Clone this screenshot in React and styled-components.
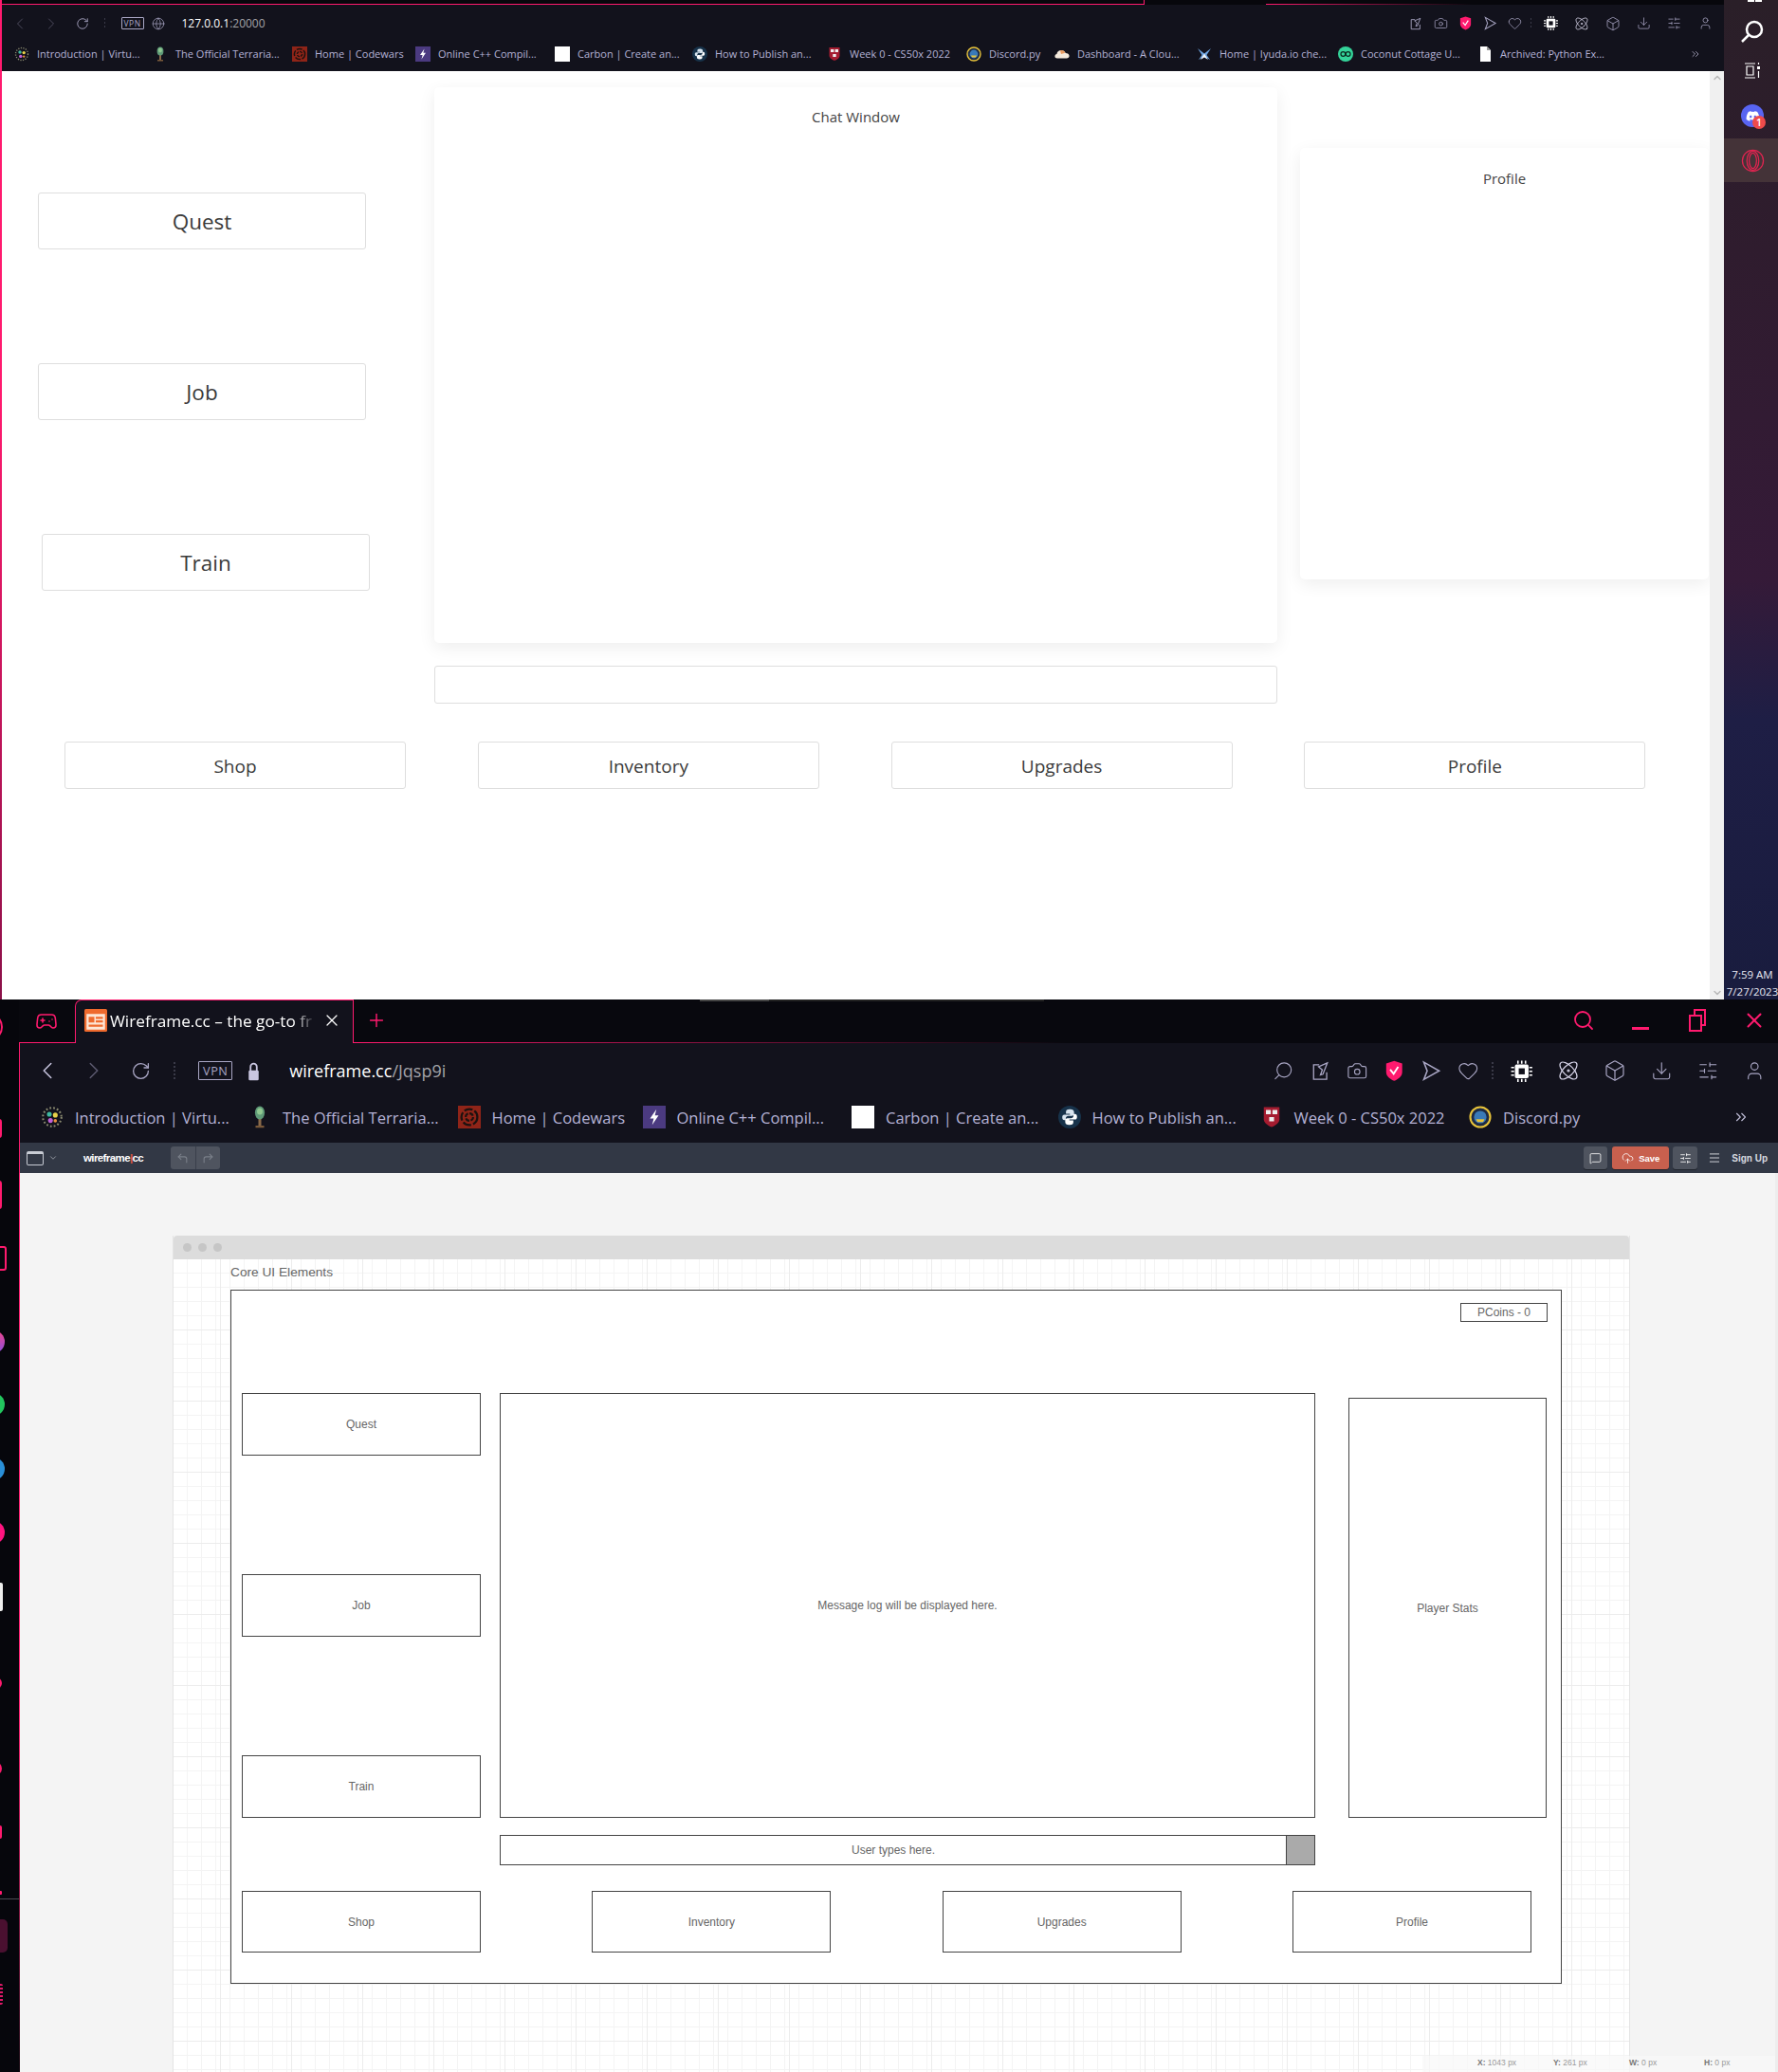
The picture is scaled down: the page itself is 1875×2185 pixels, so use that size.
import React from "react";
import styled, { createGlobalStyle } from "styled-components";
import {
  ChevronLeft,
  ChevronRight,
  RotateCw,
  Globe,
  Search,
  Camera,
  Heart,
  Box,
  Download,
  SlidersHorizontal,
  User,
  X,
  Plus,
  Gamepad2,
  Atom,
  ChevronsRight,
  MessageSquare,
  Menu,
  CornerUpLeft,
  CornerUpRight,
  CloudUpload,
} from "lucide-react";
import { FaDiscord } from "react-icons/fa";

const UI_FONT = `"Open Sans", "Noto Sans", sans-serif`;
const WF_FONT = `"Liberation Sans", Arial, sans-serif`;
const PINK = "#ff1a6e";
const LAV = "#a9a6c4";

const GlobalStyle = createGlobalStyle`
  html, body {
    margin: 0;
    padding: 0;
    background: #06060c;
  }
  body {
    font-family: ${UI_FONT};
    overflow: hidden;
  }
  * {
    box-sizing: border-box;
  }
`;

const Screen = styled.div`
  width: 1875px;
  height: 2185px;
  display: flex;
  flex-direction: column;
  overflow: hidden;
`;

/* upper window */
const TopWindow = styled.div`
  height: 1054px;
  flex: none;
  display: flex;
`;

const TopMain = styled.div`
  width: 1818px;
  display: flex;
  flex-direction: column;
  border-left: 2px solid;
  border-image: linear-gradient(${PINK}, ${PINK} 40%, #8a1048) 1;
`;

const TopStrip = styled.div`
  height: 5px;
  display: flex;
  background: #07070c;
`;

const StripLine = styled.div`
  height: 5px;
  width: ${(p) => p.$w}px;
  border-bottom: 1.5px solid;
  border-right: ${(p) => (p.$edge ? `1.5px solid ${PINK}` : "none")};
  border-color: ${(p) => (p.$off ? "transparent" : PINK)};
`;

const StripFade = styled.div`
  flex: 1;
  height: 5px;
  background: linear-gradient(90deg, ${PINK}, #07070c 45%) bottom / 100% 1.5px no-repeat;
`;

const Page = styled.div`
  flex: 1;
  display: flex;
  min-height: 0;
  background: #fff;
`;

const PageBody = styled.div`
  flex: 1;
  display: flex;
  flex-direction: column;
`;

const PageRow = styled.div`
  display: flex;
  padding-left: 38px;
`;

const ActionCol = styled.div`
  width: 350px;
  padding-top: 128px;
  display: flex;
  flex-direction: column;
  gap: 120px;
`;

const ChatCol = styled.div`
  width: 889px;
  margin-left: 68px;
  padding-top: 17px;
  display: flex;
  flex-direction: column;
`;

const SideCol = styled.div`
  width: 431px;
  margin-left: 24px;
  padding-top: 81px;
`;

const PageButton = styled.div`
  width: ${(p) => p.$w || 346}px;
  height: ${(p) => p.$h || 60}px;
  margin-left: ${(p) => p.$shift || 0}px;
  padding-top: 1px;
  display: flex;
  align-items: center;
  justify-content: center;
  background: #fff;
  border: 1px solid #dedede;
  border-radius: 3px;
  color: #3a3a3a;
  font-size: ${(p) => p.$fs || 22.5}px;
`;

const Card = styled.div`
  height: ${(p) => p.$h}px;
  padding-top: ${(p) => p.$pad}px;
  text-align: center;
  background: #fff;
  border-radius: 5px;
  box-shadow: 0 5px 18px rgba(0, 0, 0, 0.07);
  color: #444;
  font-size: 15px;
  line-height: 20px;
`;

const ChatInput = styled.div`
  height: 40px;
  margin-top: 24px;
  border: 1px solid #dedede;
  border-radius: 3px;
`;

const PageNav = styled.div`
  display: grid;
  grid-template-columns: repeat(4, 360px);
  column-gap: 75.8px;
  margin-top: 40px;
  padding-left: 66px;
`;

const ScrollTrack = styled.div`
  width: 15px;
  display: flex;
  flex-direction: column;
  justify-content: space-between;
  align-items: center;
  padding: 1px 0;
  background: #f0f0f0;
  color: #b8b8b8;
`;

/* windows taskbar */
const Taskbar = styled.div`
  width: 57px;
  padding-left: 3px;
  display: flex;
  flex-direction: column;
  align-items: center;
  background: linear-gradient(#2a1f28 0, #2f1c2e 25%, #351a38 58%, #1e1e45 72%, #191c3e 100%);
  color: #fff;
`;

const WinLogo = styled.div`
  width: 15px;
  height: 2px;
  margin-left: 4px;
  background: linear-gradient(90deg, #fff 45%, transparent 45%, transparent 55%, #fff 55%);
`;

const BarIcon = styled.div`
  height: ${(p) => p.$h}px;
  width: 100%;
  margin-top: ${(p) => p.$top || 0}px;
  display: flex;
  align-items: center;
  justify-content: center;
`;

const OperaTile = styled.div`
  height: 46px;
  width: 57px;
  margin: 12px 0 0 -3px;
  padding-left: 3px;
  display: flex;
  align-items: center;
  justify-content: center;
  background: #443338;
`;

const DiscordDot = styled.div`
  position: relative;
  width: 24px;
  height: 24px;
  border-radius: 50%;
  background: #5865f2;
  display: flex;
  align-items: center;
  justify-content: center;
  color: #fff;
`;

const DiscordBadge = styled.span`
  position: absolute;
  right: -2px;
  bottom: -2px;
  width: 14px;
  height: 14px;
  border-radius: 50%;
  background: #ee4b4b;
  color: #fff;
  font-size: 10.5px;
  font-weight: 600;
  line-height: 14px;
  text-align: center;
`;

const Clock = styled.div`
  margin-top: auto;
  margin-bottom: -1px;
  text-align: center;
  color: #e6e6f0;
  font-size: 11.5px;
  line-height: 18px;
  white-space: nowrap;
`;

/* browser chrome shared by both windows */
const Toolbar = styled.div`
  height: ${(p) => 39 * p.$s}px;
  display: flex;
  align-items: center;
  padding-left: ${(p) => 2.5 * p.$s}px;
  background: #12121c;
  color: ${LAV};
`;

const Slot = styled.div`
  width: ${(p) => p.$w * p.$s}px;
  margin-left: ${(p) => (p.$ml || 0) * p.$s}px;
  flex: none;
  display: flex;
  align-items: center;
  justify-content: center;
  color: ${(p) => p.$c || "inherit"};
`;

const Dots = styled.div`
  width: ${(p) => 1.5 * p.$s}px;
  height: ${(p) => 12 * p.$s}px;
  background: repeating-linear-gradient(#3a3a48 0 2px, transparent 2px 4px);
`;

const VpnTag = styled.div`
  width: ${(p) => 24 * p.$s}px;
  height: ${(p) => 13.5 * p.$s}px;
  border: 1px solid ${LAV};
  border-radius: 1px;
  display: flex;
  align-items: center;
  justify-content: center;
  font-size: ${(p) => 8.5 * p.$s}px;
  letter-spacing: 0.5px;
  color: ${LAV};
`;

const Address = styled.div`
  margin-left: ${(p) => 17 * p.$s}px;
  font-size: ${(p) => 12 * p.$s}px;
  color: #a3a3a8;
  white-space: nowrap;
`;

const Host = styled.span`
  color: #fff;
`;

const ToolRight = styled.div`
  margin-left: auto;
  display: flex;
  align-items: center;
  padding-right: ${(p) => p.$pad || 0}px;
`;

const Bookmarks = styled.div`
  height: ${(p) => 31 * p.$s}px;
  padding-bottom: ${(p) => p.$pb}px;
  padding-left: ${(p) => p.$left}px;
  display: flex;
  align-items: center;
  background: #12121c;
`;

const Bookmark = styled.div`
  width: ${(p) => p.$w * p.$s}px;
  flex: none;
  display: flex;
  align-items: center;
  gap: ${(p) => 8 * p.$s}px;
  color: #b5b2d6;
  font-size: ${(p) => 11 * p.$s}px;
  white-space: nowrap;
`;

const Fav = styled.svg`
  width: ${(p) => 16 * p.$s}px;
  height: ${(p) => 16 * p.$s}px;
  flex: none;
`;

const MoreMarks = styled.div`
  margin-left: auto;
  padding-right: ${(p) => p.$pad}px;
  display: flex;
  color: #c0bed8;
`;

/* lower window */
const BottomWindow = styled.div`
  flex: 1;
  display: flex;
  min-height: 0;
`;

const Rail = styled.div`
  width: 20px;
  flex: none;
  overflow: hidden;
  display: flex;
  flex-direction: column;
  background: #06060c;
`;

const RailMark = styled.div`
  flex: none;
  width: ${(p) => p.$w}px;
  height: ${(p) => p.$h}px;
  margin-top: ${(p) => p.$gap}px;
  margin-left: ${(p) => p.$left || 0}px;
  border-radius: ${(p) => p.$r || "50%"};
  background: ${(p) => p.$bg || "transparent"};
  border: ${(p) => (p.$line ? `2px solid ${p.$line}` : "none")};
`;

const BottomMain = styled.div`
  flex: 1;
  min-width: 0;
  display: flex;
  flex-direction: column;
`;

const TabStrip = styled.div`
  position: relative;
  height: 46px;
  flex: none;
  display: flex;
  background: #08080e;
`;

const ScrollSliver = styled.div`
  position: absolute;
  top: 0;
  left: 718px;
  width: 363px;
  height: 2px;
  background: linear-gradient(90deg, #444 0, #444 20%, #222 20%);
`;

const StripLead = styled.div`
  width: 59px;
  padding-left: 17px;
  display: flex;
  align-items: center;
  border-bottom: 1.5px solid ${PINK};
  color: ${PINK};
`;

const Tab = styled.div`
  width: 294px;
  display: flex;
  align-items: center;
  padding: 0 0 3px 9px;
  background: #12121c;
  border: 1.5px solid ${PINK};
  border-bottom: none;
  border-top-left-radius: 7px;
  color: #fff;
`;

const TabTitle = styled.div`
  width: 224px;
  margin-left: 3px;
  white-space: nowrap;
  font-size: 17.2px;
  -webkit-mask-image: linear-gradient(90deg, #000 86%, transparent 97%);
  mask-image: linear-gradient(90deg, #000 86%, transparent 97%);
`;

const StripTail = styled.div`
  flex: 1;
  display: flex;
  align-items: center;
  padding-left: 13px;
  padding-bottom: 3px;
  color: ${PINK};
  background: linear-gradient(90deg, ${PINK}, #08080e 50%) bottom / 100% 1.5px no-repeat;
`;

const WinControls = styled.div`
  margin-left: auto;
  display: flex;
  gap: 10px;
`;

const WinSlot = styled.div`
  width: 50px;
  display: flex;
  align-items: center;
  justify-content: center;
`;

const MinBar = styled.div`
  width: 18px;
  height: 2.5px;
  margin-top: 18px;
  background: ${PINK};
`;

const BrowserBody = styled.div`
  flex: 1;
  min-height: 0;
  display: flex;
  flex-direction: column;
  border-left: 1.5px solid;
  border-image: linear-gradient(${PINK}, ${PINK} 65%, #3a0a20 95%, #12060e) 1;
`;

const WfBar = styled.div`
  height: 32px;
  flex: none;
  display: flex;
  align-items: center;
  background: #323845;
  color: #e4e6ea;
  font-family: ${WF_FONT};
`;

const WfWindowIcon = styled.div`
  width: 18px;
  height: 15px;
  margin-left: 7px;
  border: 1.5px solid #c8ccd4;
  border-top-width: 3px;
  border-radius: 2px;
`;

const WfCaret = styled.span`
  display: flex;
  margin-left: 5px;
  color: #c8ccd4;
  transform: rotate(-90deg);
`;

const WfLogo = styled.div`
  margin-left: 27px;
  width: 65px;
  color: #fff;
  font-size: 11.5px;
  font-weight: 700;
  letter-spacing: -0.6px;
`;

const WfBar2 = styled.span`
  color: #e2563f;
`;

const UndoGroup = styled.div`
  width: 52px;
  height: 24px;
  margin-left: 27px;
  display: flex;
  border-radius: 3px;
  overflow: hidden;
`;

const UndoCell = styled.div`
  flex: 1;
  display: flex;
  align-items: center;
  justify-content: center;
  background: #4f545f;
  border-left: ${(p) => (p.$split ? "1px solid #3a3f4b" : "none")};
  color: #7b808a;
`;

const WfRight = styled.div`
  margin-left: auto;
  display: flex;
  align-items: center;
  padding-right: 11px;
`;

const WfButton = styled.div`
  width: ${(p) => p.$w}px;
  height: 24px;
  margin-left: ${(p) => p.$ml || 0}px;
  display: flex;
  align-items: center;
  justify-content: center;
  gap: 5px;
  border-radius: 3px;
  background: ${(p) => p.$bg};
  box-shadow: 0 1px 0 rgba(0, 0, 0, 0.35);
  color: #fff;
  font-size: 9.5px;
  font-weight: 700;
`;

const WfMenu = styled.span`
  display: flex;
  margin-left: 11px;
`;

const SignUp = styled.div`
  margin-left: 11px;
  font-size: 10px;
  font-weight: 700;
  color: #d8dbe0;
`;

const Canvas = styled.div`
  position: relative;
  flex: 1;
  min-height: 0;
  overflow: hidden;
  padding: 66px 0 0 161px;
  background: #f4f4f4;
  border-right: 3px solid #ededed;
`;

const SheetWindow = styled.div`
  width: 1537px;
  height: 100%;
  display: flex;
  flex-direction: column;
  border-left: 1px solid #e4e4e4;
  border-right: 1px solid #e4e4e4;
`;

const SheetTitle = styled.div`
  height: 25px;
  flex: none;
  display: flex;
  align-items: center;
  gap: 7px;
  padding-left: 10px;
  background: #dcdcdc;
  border-radius: 4px 4px 0 0;
`;

const SheetDot = styled.span`
  width: 9px;
  height: 9px;
  border-radius: 50%;
  background: #c6c6c6;
`;

const SheetGrid = styled.div`
  flex: 1;
  padding-left: 60px;
  background-color: #fff;
  background-image:
    linear-gradient(#ececec 1px, transparent 1px),
    linear-gradient(90deg, #ececec 1px, transparent 1px),
    linear-gradient(#f4f4f4 1px, transparent 1px),
    linear-gradient(90deg, #f4f4f4 1px, transparent 1px);
  background-size: 75px 75px, 75px 75px, 15px 15px, 15px 15px;
  background-position: 0 -1px, 49px 0, 0 -1px, -1px 0;
`;

const SheetLabel = styled.div`
  height: 32px;
  padding-top: 5px;
  color: #666;
  font-family: ${WF_FONT};
  font-size: 13.7px;
  line-height: 18px;
`;

const Frame = styled.div`
  width: 1404px;
  height: 732px;
  background: #fff;
  border: 1.5px solid #444;
  padding: 13px 14px 0 11px;
  font-family: ${WF_FONT};
  font-size: 12px;
  color: #666;
`;

const FrameHead = styled.div`
  display: flex;
  justify-content: flex-end;
`;

const Outline = styled.div`
  width: ${(p) => p.$w}px;
  height: ${(p) => p.$h}px;
  margin-top: ${(p) => p.$top || 0}px;
  flex: none;
  display: flex;
  align-items: center;
  justify-content: center;
  background: #fff;
  border: 1.5px solid #444;
`;

const FrameMain = styled.div`
  display: flex;
  margin-top: 75px;
`;

const FrameActions = styled.div`
  display: flex;
  flex-direction: column;
  gap: 125.5px;
`;

const FrameCenter = styled.div`
  width: 860px;
  margin-left: 20px;
  display: flex;
  flex-direction: column;
`;

const FrameInput = styled.div`
  height: 32px;
  margin-top: 18px;
  display: flex;
  border: 1.5px solid #444;
`;

const FrameInputText = styled.div`
  flex: 1;
  display: flex;
  align-items: center;
  justify-content: center;
`;

const FrameSend = styled.div`
  width: 30px;
  background: #aaa;
  border-left: 1.5px solid #444;
`;

const FrameStats = styled.div`
  margin-left: 35px;
`;

const FrameNav = styled.div`
  display: flex;
  justify-content: space-between;
  margin-top: 27px;
  padding-right: 17px;
`;

const StatusBar = styled.div`
  position: absolute;
  right: 0;
  bottom: 0;
  height: 17px;
  padding: 0 0 4px 58px;
  display: grid;
  grid-template-columns: 80px 80px 79px 75px;
  align-items: center;
  background: rgba(248, 248, 248, 0.75);
  color: #999;
  font-family: ${WF_FONT};
  font-size: 8.5px;
`;

const StatusKey = styled.b`
  color: #777;
`;

const Flipped = styled.span`
  display: flex;
  transform: ${(p) => p.$t};
`;

/* small drawings */
const Favicon = ({ name, s }) => {
  const common = { $s: s, viewBox: "0 0 16 16" };
  switch (name) {
    case "virt":
      return (
        <Fav {...common}>
          <circle cx="8" cy="8" r="6.5" fill="none" stroke="#8a8a70" strokeWidth="1.4" strokeDasharray="1.2 1.4" />
          <circle cx="6" cy="6" r="1.7" fill="#3fb8a0" />
          <circle cx="10.2" cy="6.6" r="1.7" fill="#e8d24a" />
          <circle cx="6.8" cy="10.4" r="1.7" fill="#c060d8" />
          <circle cx="10.2" cy="10.6" r="1.2" fill="#e89040" />
        </Fav>
      );
    case "terraria":
      return (
        <Fav {...common}>
          <rect x="7" y="9" width="2" height="6" fill="#8a6a4a" />
          <rect x="5" y="14" width="6" height="1.5" fill="#7a5a3a" />
          <ellipse cx="8" cy="5" rx="3.4" ry="4.6" fill="#5f9a78" />
          <ellipse cx="8" cy="4" rx="2" ry="2.4" fill="#8fc890" />
        </Fav>
      );
    case "codewars":
      return (
        <Fav {...common}>
          <rect width="16" height="16" fill="#8f2418" />
          <circle cx="8" cy="8" r="5.6" fill="none" stroke="#1c1210" strokeWidth="1.5" strokeDasharray="6 1.5" />
          <circle cx="8" cy="8" r="2.6" fill="none" stroke="#1c1210" strokeWidth="1.4" strokeDasharray="3 1" />
        </Fav>
      );
    case "cpp":
      return (
        <Fav {...common}>
          <rect width="16" height="16" fill="#4b3a80" />
          <polygon points="9.5,2.5 5,9 7.6,9 6.5,13.5 11,6.8 8.4,6.8" fill="#fff" />
        </Fav>
      );
    case "carbon":
      return (
        <Fav {...common}>
          <rect width="16" height="16" fill="#fff" />
        </Fav>
      );
    case "python":
      return (
        <Fav {...common}>
          <circle cx="8" cy="8" r="8" fill="#17324a" />
          <path d="M8 2.5c-2 0-2.6.8-2.6 2v1.2h2.8v.6H4.3C3.2 6.3 2.8 7 2.8 8.2s.5 2 1.5 2h1V8.8c0-1 .8-1.7 1.8-1.7h2.5c.9 0 1.5-.7 1.5-1.5V4.5c0-1.2-1-2-2.6-2z" fill="#d8e4ee" />
          <path d="M8 13.5c2 0 2.6-.8 2.6-2v-1.2H7.8v-.6h3.9c1.1 0 1.5-.7 1.5-1.9s-.5-2-1.5-2h-1v1.4c0 1-.8 1.7-1.8 1.7H6.4c-.9 0-1.5.7-1.5 1.5v1.1c0 1.2 1 2 2.6 2z" fill="#fff" />
        </Fav>
      );
    case "harvard":
      return (
        <Fav {...common}>
          <path d="M2.5 1h11v8.5c0 2.6-3 4.6-5.5 5.5-2.5-.9-5.5-2.9-5.5-5.5z" fill="#a51c30" />
          <rect x="4" y="3" width="3.4" height="3" fill="#eee" />
          <rect x="8.6" y="3" width="3.4" height="3" fill="#eee" />
          <rect x="6.3" y="8" width="3.4" height="3" fill="#eee" />
        </Fav>
      );
    case "discordpy":
      return (
        <Fav {...common}>
          <circle cx="8" cy="8" r="7" fill="#1d2a44" stroke="#e8c33a" strokeWidth="1.4" />
          <circle cx="8" cy="8" r="4.4" fill="#3a7ab8" />
          <path d="M5 9.5h6l-1 2H6z" fill="#e8c33a" />
        </Fav>
      );
    case "cloud":
      return (
        <Fav {...common}>
          <path d="M3 12.5c-1.6 0-2.6-1-2.6-2.3 0-1.2.9-2.1 2-2.3C2.8 5.6 4.8 4 7.2 4c2.1 0 3.9 1.2 4.5 3 2.1 0 3.9 1.2 3.9 3 0 1.5-1.2 2.5-2.8 2.5z" fill="#f4e9dc" />
          <path d="M6 4.4c1.8-1 4.4-.2 5.4 2.4L7 8z" fill="#e89a60" />
        </Fav>
      );
    case "iyuda":
      return (
        <Fav {...common}>
          <path d="M1 2l7 5.5L15 2l-4.5 7L14 14l-6-3.5L2 14l3.5-5z" fill="#6ea4e0" />
          <path d="M8 7.5l-4 6.500 4-2.500 4 2.500z" fill="#f2f6fb" />
        </Fav>
      );
    case "coconut":
      return (
        <Fav {...common}>
          <circle cx="8" cy="8" r="8" fill="#34d399" />
          <circle cx="5.4" cy="8" r="2.4" fill="none" stroke="#0b2a20" strokeWidth="1.2" />
          <circle cx="10.6" cy="8" r="2.4" fill="none" stroke="#0b2a20" strokeWidth="1.2" />
        </Fav>
      );
    default:
      return (
        <Fav {...common}>
          <path d="M3 0h7l4 4v12H3z" fill="#fff" />
          <path d="M10 0v4h4z" fill="#999" />
        </Fav>
      );
  }
};

const ShareIcon = ({ size }) => (
  <svg width={size} height={size} viewBox="0 0 16 16" fill="none" stroke="currentColor" strokeWidth="1">
    <path d="M7 3H2.5v11.5H13V9" />
    <path d="M13.5 1.5l-7 3 3 2.5-1.5 4 2-.5z" />
  </svg>
);

const SendIcon = ({ size }) => (
  <svg width={size} height={size} viewBox="0 0 16 16" fill="none" stroke="currentColor" strokeWidth="1.1">
    <path d="M2.5 1.5L14 8 2.5 14.5 5 8z" />
  </svg>
);

const LockIcon = ({ size }) => (
  <svg width={size} height={size} viewBox="0 0 16 16" fill="none" stroke="#c9c6e0" strokeWidth="1.4">
    <path d="M5.5 8V4.5a2.5 2.5 0 0 1 5 0V8" />
    <rect x="4" y="7.5" width="8" height="8" rx="1" fill="#c9c6e0" stroke="none" />
  </svg>
);

const ShieldIcon = ({ size }) => (
  <svg width={size} height={size} viewBox="0 0 16 16">
    <path d="M8 .5l6 2V9c0 3-3 5.3-6 6.5C5 14.3 2 12 2 9V2.5z" fill={PINK} />
    <path d="M5 7l2.6 3.2L11 5" fill="none" stroke="#fff" strokeWidth="1.3" />
  </svg>
);

const ChipIcon = ({ size }) => (
  <svg width={size} height={size} viewBox="0 0 16 16" fill="#fff">
    <rect x="3.5" y="3.5" width="9" height="9" rx="1" />
    <path d="M5 1h1v2H5zm2.5 0h1v2h-1zM10 1h1v2h-1zM5 13h1v2H5zm2.5 0h1v2h-1zM10 13h1v2h-1zM1 5h2v1H1zm0 2.5h2v1H1zM1 10h2v1H1zm12-5h2v1h-2zm0 2.5h2v1h-2zm0 2.5h2v1h-2z" />
    <rect x="6" y="6" width="4" height="4" fill="#12121c" />
  </svg>
);

const RestoreIcon = () => (
  <svg width="20" height="26" viewBox="0 0 20 26" fill="none" stroke={PINK} strokeWidth="2">
    <rect x="2" y="8" width="12" height="16" />
    <path d="M7 8V2h11v16h-4" />
  </svg>
);

const SearchGlassIcon = () => (
  <svg width="26" height="26" viewBox="0 0 26 26" fill="none" stroke="#fff" strokeWidth="2.5">
    <circle cx="15" cy="11" r="8" />
    <path d="M9 17l-7 7" />
  </svg>
);

const WidgetIcon = () => (
  <svg width="18" height="17" viewBox="0 0 18 17" fill="none" stroke="#fff" strokeWidth="1.2">
    <path d="M1 1h11M1 16h11M3 4h7v9H3z" />
    <rect x="14" y="4" width="3" height="3" fill="#fff" stroke="none" />
    <path d="M15.5 0v2M15.5 9v7" />
  </svg>
);

const OperaIcon = () => (
  <svg width="25" height="25" viewBox="0 0 26 26" fill="none" stroke="#e02450" strokeWidth="1.3">
    <circle cx="13" cy="13" r="11.5" />
    <ellipse cx="13" cy="13" rx="6.5" ry="10.5" />
    <ellipse cx="13" cy="13" rx="4" ry="8.5" />
  </svg>
);

const TOP_MARKS = [
  ["virt", "Introduction | Virtu...", 146],
  ["terraria", "The Official Terraria...", 147],
  ["codewars", "Home | Codewars", 130],
  ["cpp", "Online C++ Compil...", 147],
  ["carbon", "Carbon | Create an...", 145],
  ["python", "How to Publish an...", 142],
  ["harvard", "Week 0 - CS50x 2022", 147],
  ["discordpy", "Discord.py", 93],
  ["cloud", "Dashboard - A Clou...", 150],
  ["iyuda", "Home | Iyuda.io che...", 149],
  ["coconut", "Coconut Cottage U...", 147],
  ["doc", "Archived: Python Ex...", 150],
];

const RAIL_MARKS = [
  { gap: 15, w: 26, h: 28, left: -23, line: PINK },
  { gap: 83, w: 8, h: 20, left: -6, r: "3px", line: PINK },
  { gap: 45, w: 8, h: 30, left: -6, r: "3px", line: PINK },
  { gap: 39, w: 14, h: 26, left: -7, r: "3px", line: PINK },
  { gap: 63, w: 24, h: 24, left: -19, bg: "linear-gradient(#f0458a, #8a4fe0)" },
  { gap: 42, w: 24, h: 24, left: -19, bg: "#22c55e" },
  { gap: 44, w: 24, h: 24, left: -19, bg: "#2a8fd8" },
  { gap: 43, w: 24, h: 24, left: -19, bg: "#ff1480" },
  { gap: 41, w: 8, h: 30, left: -5, r: "2px", bg: "#eee" },
  { gap: 70, w: 12, h: 12, left: -10, bg: PINK },
  { gap: 77, w: 14, h: 14, left: -12, bg: PINK },
  { gap: 53, w: 8, h: 14, left: -6, r: "2px", bg: PINK },
  { gap: 55, w: 6, h: 4, left: -4, r: "1px", bg: PINK },
  { gap: 4, w: 20, h: 1, r: "0", bg: "#4a4a50" },
  { gap: 21, w: 16, h: 35, left: -8, r: "5px", bg: "#4a1030" },
  { gap: 33, w: 6, h: 22, left: -3, r: "2px", bg: "repeating-linear-gradient(#e01868 0 2px, transparent 2px 4px)" },
];

const BrowserTools = ({ s, host, path, secure }) => {
  const i = (n) => n * s;
  return (
    <Toolbar $s={s}>
      <Slot $s={s} $w={33} $c={secure ? "#c9c6e0" : "#4c4a5c"}>
        <ChevronLeft size={i(20)} strokeWidth={1.2} />
      </Slot>
      <Slot $s={s} $w={33} $c={secure ? "#5c5a70" : "#4c4a5c"}>
        <ChevronRight size={i(20)} strokeWidth={1.2} />
      </Slot>
      <Slot $s={s} $w={33}>
        <RotateCw size={i(14)} strokeWidth={1.5} />
      </Slot>
      <Slot $s={s} $w={14}>
        <Dots $s={s} />
      </Slot>
      <Slot $s={s} $w={24} $ml={10}>
        <VpnTag $s={s}>VPN</VpnTag>
      </Slot>
      <Slot $s={s} $w={16} $ml={7}>
        {secure ? <LockIcon size={i(14)} /> : <Globe size={i(14)} strokeWidth={1.2} />}
      </Slot>
      <Address $s={s}>
        <Host>{host}</Host>
        {path}
      </Address>
      <ToolRight $pad={secure ? 0 : 3}>
        {secure && (
          <Slot $s={s} $w={26}>
            <Flipped $t="scaleX(-1)">
              <Search size={i(15)} strokeWidth={1.2} />
            </Flipped>
          </Slot>
        )}
        <Slot $s={s} $w={26}>
          <ShareIcon size={i(14)} />
        </Slot>
        <Slot $s={s} $w={26}>
          <Camera size={i(15)} strokeWidth={1.2} />
        </Slot>
        <Slot $s={s} $w={26}>
          <ShieldIcon size={i(15)} />
        </Slot>
        <Slot $s={s} $w={26}>
          <SendIcon size={i(15)} />
        </Slot>
        <Slot $s={s} $w={26}>
          <Heart size={i(15)} strokeWidth={1.2} />
        </Slot>
        <Slot $s={s} $w={8.5}>
          <Dots $s={s} />
        </Slot>
        <Slot $s={s} $w={32.7}>
          <ChipIcon size={i(17)} />
        </Slot>
        <Slot $s={s} $w={32.7}>
          <Atom size={i(16)} strokeWidth={1.2} color="#d8d6ea" />
        </Slot>
        <Slot $s={s} $w={32.7}>
          <Box size={i(16)} strokeWidth={1.2} />
        </Slot>
        <Slot $s={s} $w={32.7}>
          <Download size={i(15)} strokeWidth={1.2} />
        </Slot>
        <Slot $s={s} $w={32.7}>
          <SlidersHorizontal size={i(15)} strokeWidth={1.2} />
        </Slot>
        <Slot $s={s} $w={32.7}>
          <User size={i(15)} strokeWidth={1.2} />
        </Slot>
      </ToolRight>
    </Toolbar>
  );
};

const BookmarkRow = ({ s, left, pad, pb, marks }) => (
  <Bookmarks $s={s} $left={left} $pb={pb}>
    {marks.map(([icon, label, w]) => (
      <Bookmark key={label} $s={s} $w={w}>
        <Favicon name={icon} s={s} />
        {label}
      </Bookmark>
    ))}
    <MoreMarks $pad={pad}>
      <ChevronsRight size={12 * s} strokeWidth={1.5} />
    </MoreMarks>
  </Bookmarks>
);

const App = () => (
  <Screen>
    <GlobalStyle />
    <TopWindow>
      <TopMain>
        <TopStrip>
          <StripLine $w={1205} $edge />
          <StripLine $w={128} $off />
          <StripFade />
        </TopStrip>
        <BrowserTools s={1} host="127.0.0.1" path=":20000" />
        <BookmarkRow s={1} left={13} pad={24} pb={6} marks={TOP_MARKS} />
        <Page>
          <PageBody>
            <PageRow>
              <ActionCol>
                <PageButton>Quest</PageButton>
                <PageButton>Job</PageButton>
                <PageButton $shift={4}>Train</PageButton>
              </ActionCol>
              <ChatCol>
                <Card $h={586} $pad={21}>Chat Window</Card>
                <ChatInput />
              </ChatCol>
              <SideCol>
                <Card $h={455} $pad={22}>Profile</Card>
              </SideCol>
            </PageRow>
            <PageNav>
              <PageButton $w={360} $h={50} $fs={19}>Shop</PageButton>
              <PageButton $w={360} $h={50} $fs={19}>Inventory</PageButton>
              <PageButton $w={360} $h={50} $fs={19}>Upgrades</PageButton>
              <PageButton $w={360} $h={50} $fs={19}>Profile</PageButton>
            </PageNav>
          </PageBody>
          <ScrollTrack>
            <Flipped $t="rotate(90deg)">
              <ChevronLeft size={12} strokeWidth={3} />
            </Flipped>
            <Flipped $t="rotate(-90deg)">
              <ChevronLeft size={12} strokeWidth={3} />
            </Flipped>
          </ScrollTrack>
        </Page>
      </TopMain>
      <Taskbar>
        <WinLogo />
        <BarIcon $h={26} $top={18}>
          <SearchGlassIcon />
        </BarIcon>
        <BarIcon $h={18} $top={19}>
          <WidgetIcon />
        </BarIcon>
        <BarIcon $h={24} $top={27}>
          <DiscordDot>
            <FaDiscord size={15} />
            <DiscordBadge>1</DiscordBadge>
          </DiscordDot>
        </BarIcon>
        <OperaTile>
          <OperaIcon />
        </OperaTile>
        <Clock>
          7:59 AM
          <br />
          7/27/2023
        </Clock>
      </Taskbar>
    </TopWindow>

    <BottomWindow>
      <Rail>
        {RAIL_MARKS.map((m, idx) => (
          <RailMark
            key={idx}
            $gap={m.gap}
            $w={m.w}
            $h={m.h}
            $left={m.left}
            $r={m.r}
            $bg={m.bg}
            $line={m.line}
          />
        ))}
      </Rail>
      <BottomMain>
        <TabStrip>
          <ScrollSliver />
          <StripLead>
            <Gamepad2 size={24} strokeWidth={1.6} />
          </StripLead>
          <Tab>
            <Fav $s={1.5} viewBox="0 0 16 16">
              <rect width="16" height="16" rx="1" fill="#ef6a2e" />
              <rect x="1.5" y="3.5" width="13" height="11" fill="#fde6d6" />
              <rect x="3" y="5.5" width="4" height="4" fill="#ef6a2e" />
              <rect x="8" y="5.5" width="5" height="1.5" fill="#ef6a2e" />
              <rect x="8" y="8" width="5" height="1.5" fill="#ef6a2e" />
              <rect x="3" y="11" width="10" height="1.5" fill="#ef6a2e" />
            </Fav>
            <TabTitle>Wireframe.cc – the go-to fr</TabTitle>
            <X size={20} strokeWidth={1.5} />
          </Tab>
          <StripTail>
            <Plus size={22} strokeWidth={1.6} />
            <WinControls>
              <WinSlot>
                <Search size={24} strokeWidth={1.8} />
              </WinSlot>
              <WinSlot>
                <MinBar />
              </WinSlot>
              <WinSlot>
                <RestoreIcon />
              </WinSlot>
              <WinSlot>
                <X size={26} strokeWidth={1.8} />
              </WinSlot>
            </WinControls>
          </StripTail>
        </TabStrip>
        <BrowserBody>
          <BrowserTools s={1.5} host="wireframe.cc" path="/Jqsp9i" secure />
          <BookmarkRow s={1.5} left={22} pad={30} pb={7.5} marks={TOP_MARKS.slice(0, 8)} />
          <WfBar>
            <WfWindowIcon />
            <WfCaret>
              <ChevronLeft size={10} strokeWidth={1.5} />
            </WfCaret>
            <WfLogo>
              wireframe<WfBar2>|</WfBar2>cc
            </WfLogo>
            <UndoGroup>
              <UndoCell>
                <CornerUpLeft size={13} />
              </UndoCell>
              <UndoCell $split>
                <CornerUpRight size={13} />
              </UndoCell>
            </UndoGroup>
            <WfRight>
              <WfButton $w={25} $bg="#4f545f">
                <MessageSquare size={13} strokeWidth={1.5} />
              </WfButton>
              <WfButton $w={60} $ml={5} $bg="#c8604e">
                <CloudUpload size={13} strokeWidth={1.5} />
                Save
              </WfButton>
              <WfButton $w={26} $ml={4} $bg="#4f545f">
                <SlidersHorizontal size={13} strokeWidth={1.5} />
              </WfButton>
              <WfMenu>
                <Menu size={14} strokeWidth={1.5} />
              </WfMenu>
              <SignUp>Sign Up</SignUp>
            </WfRight>
          </WfBar>
          <Canvas>
            <SheetWindow>
              <SheetTitle>
                <SheetDot />
                <SheetDot />
                <SheetDot />
              </SheetTitle>
              <SheetGrid>
                <SheetLabel>Core UI Elements</SheetLabel>
                <Frame>
                  <FrameHead>
                    <Outline $w={92} $h={20}>PCoins - 0</Outline>
                  </FrameHead>
                  <FrameMain>
                    <FrameActions>
                      <Outline $w={252} $h={65.5}>Quest</Outline>
                      <Outline $w={252} $h={65.5}>Job</Outline>
                      <Outline $w={252} $h={65.5}>Train</Outline>
                    </FrameActions>
                    <FrameCenter>
                      <Outline $w={860} $h={448}>Message log will be displayed here.</Outline>
                      <FrameInput>
                        <FrameInputText>User types here.</FrameInputText>
                        <FrameSend />
                      </FrameInput>
                    </FrameCenter>
                    <FrameStats>
                      <Outline $w={209} $h={443} $top={5}>Player Stats</Outline>
                    </FrameStats>
                  </FrameMain>
                  <FrameNav>
                    <Outline $w={252} $h={65}>Shop</Outline>
                    <Outline $w={252} $h={65}>Inventory</Outline>
                    <Outline $w={252} $h={65}>Upgrades</Outline>
                    <Outline $w={252} $h={65}>Profile</Outline>
                  </FrameNav>
                </Frame>
              </SheetGrid>
            </SheetWindow>
            <StatusBar>
              <span><StatusKey>X:</StatusKey> 1043 px</span>
              <span><StatusKey>Y:</StatusKey> 261 px</span>
              <span><StatusKey>W:</StatusKey> 0 px</span>
              <span><StatusKey>H:</StatusKey> 0 px</span>
            </StatusBar>
          </Canvas>
        </BrowserBody>
      </BottomMain>
    </BottomWindow>
  </Screen>
);

export default App;
